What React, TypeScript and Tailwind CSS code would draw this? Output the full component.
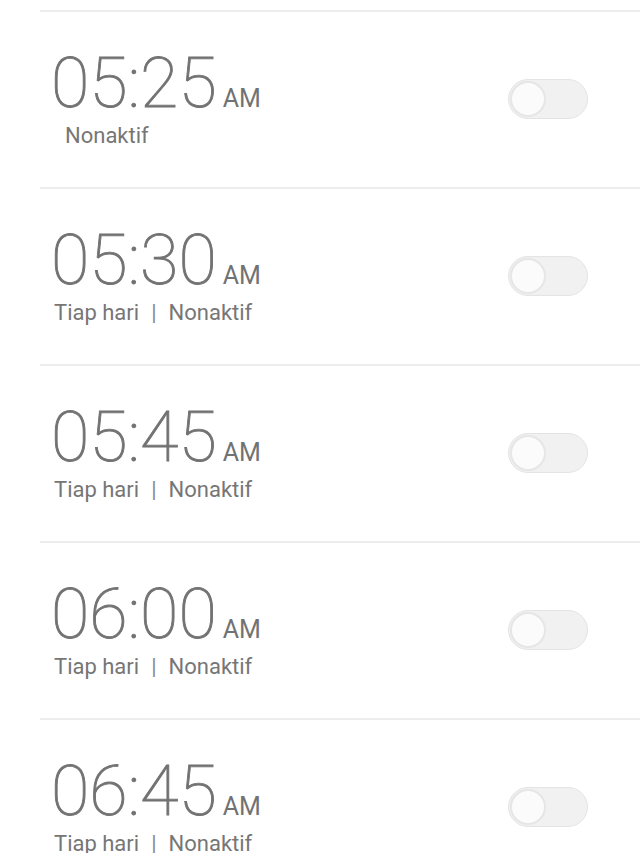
import React from 'react';

const alarms = [
  { time: '05:25', repeat: '', indent: true },
  { time: '05:30', repeat: 'Tiap hari' },
  { time: '05:45', repeat: 'Tiap hari' },
  { time: '06:00', repeat: 'Tiap hari' },
  { time: '06:45', repeat: 'Tiap hari' },
];

const Toggle = () => (
  <div className="w-[80px] h-[40px] rounded-full bg-[#f1f1f1] border border-[#e4e4e4] flex items-center px-[1px]">
    <div className="w-[36px] h-[36px] rounded-full bg-[#fbfbfb] border-2 border-[#e6e6e6]" />
  </div>
);

const App = () => {
  return (
    <div className="w-[640px] h-[853px] overflow-hidden bg-white pt-[10px]" style={{ fontFamily: 'Roboto, "Liberation Sans", sans-serif' }}>
      {alarms.map((alarm, i) => (
        <div key={i} className="ml-[40px] h-[177px] border-t-2 border-[#ececec] flex justify-between">
          <div className="pl-[11px] pt-[36px]">
            <div className="flex items-baseline text-[#727272]">
              <span className="text-[70px] leading-[70px] font-thin [-webkit-text-stroke:0.9px_#727272]">{alarm.time}</span>
              <span className="text-[25px] leading-none ml-[6px]">AM</span>
            </div>
            <div className={`mt-[5px] text-[22px] leading-[26px] text-[#767676] ${alarm.indent ? 'ml-[14px]' : 'ml-[3px]'}`}>
              {alarm.repeat ? (
                <>
                  {alarm.repeat}
                  <span className="mx-[12px] text-[#8a8a8a]">|</span>
                  Nonaktif
                </>
              ) : (
                'Nonaktif'
              )}
            </div>
          </div>
          <div className="mr-[52px] self-center -mt-[2px]">
            <Toggle />
          </div>
        </div>
      ))}
    </div>
  );
};

export default App;
